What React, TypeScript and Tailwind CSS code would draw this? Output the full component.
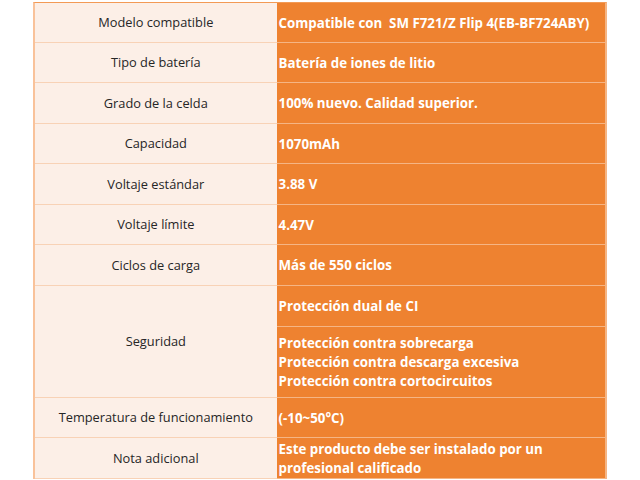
import React from "react";

type Row = { label: string; value: string[]; h: string };

const rows: Row[] = [
  { label: "Modelo compatible", value: ["Compatible con  SM F721/Z Flip 4(EB-BF724ABY)"], h: "h-[40px]" },
  { label: "Tipo de batería", value: ["Batería de iones de litio"], h: "h-[40px]" },
  { label: "Grado de la celda", value: ["100% nuevo. Calidad superior."], h: "h-[41px]" },
  { label: "Capacidad", value: ["1070mAh"], h: "h-[40px]" },
  { label: "Voltaje estándar", value: ["3.88 V"], h: "h-[41px]" },
  { label: "Voltaje límite", value: ["4.47V"], h: "h-[40px]" },
  { label: "Ciclos de carga", value: ["Más de 550 ciclos"], h: "h-[41px]" },
];

const tail: Row[] = [
  { label: "Temperatura de funcionamiento", value: ["(-10~50°C)"], h: "h-[40px]" },
  { label: "Nota adicional", value: ["Este producto debe ser instalado por un", "profesional calificado"], h: "h-[41px]" },
];

function SpecRow({ row }: { row: Row }) {
  return (
    <div className={`flex border-b border-[#f8d2b6] ${row.h}`}>
      <div className="w-[242px] flex items-center justify-center pt-px text-[12.8px] text-[#262626]">{row.label}</div>
      <div className="w-[329px] bg-[#ee8230] border-b border-[#f5b584] -mb-px flex flex-col justify-center pl-[2px] pt-px font-bold text-white text-[13.3px] leading-[19px] whitespace-pre">
        {row.value.map((v) => (
          <span key={v}>{v}</span>
        ))}
      </div>
    </div>
  );
}

export default function App() {
  return (
    <div className="w-[640px] h-[480px] bg-white pt-[2px] text-[13px]" style={{ fontFamily: '"Open Sans", "Noto Sans", sans-serif' }}>
      <div className="ml-[33px] w-[574px] border-l-2 border-r-2 border-t border-l-[#f9c29a] border-r-[#f5b584] border-t-[#f39a55] bg-[#fcefe7]">
        {rows.map((r) => (
          <SpecRow key={r.label} row={r} />
        ))}
        <div className="flex border-b border-[#f8d2b6]">
          <div className="w-[242px] flex items-center justify-center text-[12.8px] text-[#262626]">Seguridad</div>
          <div className="w-[329px] flex flex-col font-bold text-white text-[13.3px] leading-[19px] -mb-px">
            <div className="h-[41px] bg-[#ee8230] border-b border-[#f5b584] flex items-center pl-[2px]">Protección dual de CI</div>
            <div className="h-[71px] bg-[#ee8230] border-b border-[#f5b584] flex flex-col justify-center pl-[2px]">
              <span>Protección contra sobrecarga</span>
              <span>Protección contra descarga excesiva</span>
              <span>Protección contra cortocircuitos</span>
            </div>
          </div>
        </div>
        {tail.map((r) => (
          <SpecRow key={r.label} row={r} />
        ))}
      </div>
    </div>
  );
}
